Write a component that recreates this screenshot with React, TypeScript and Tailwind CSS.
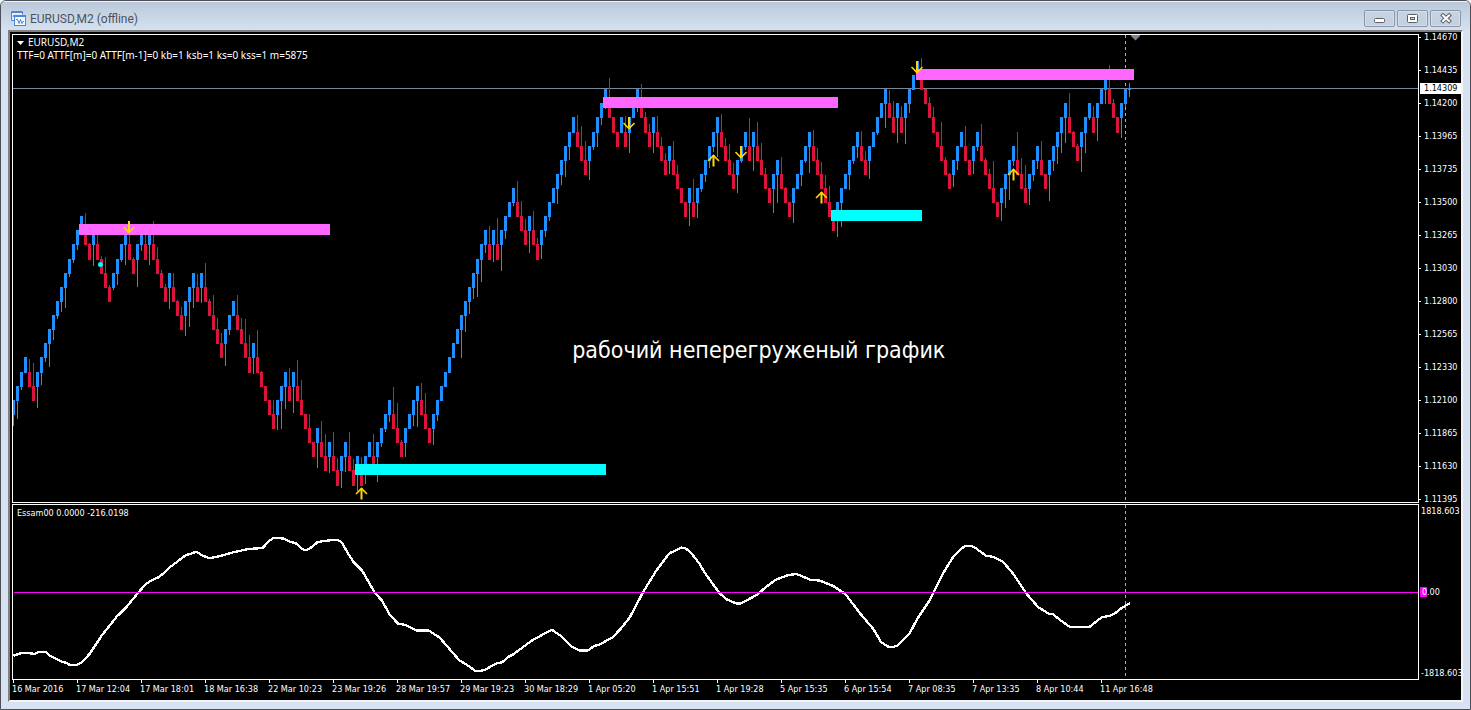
import React from "react";

const DATES = [
  "16 Mar 2016", "17 Mar 12:04", "17 Mar 18:01", "18 Mar 16:38", "22 Mar 10:23", "23 Mar 19:26",
  "28 Mar 19:57", "29 Mar 19:23", "30 Mar 18:29", "1 Apr 05:20", "1 Apr 15:51", "1 Apr 19:28",
  "5 Apr 15:35", "6 Apr 15:54", "7 Apr 08:35", "7 Apr 13:35", "8 Apr 10:44", "11 Apr 16:48",
];

const PRICES = [
  "1.14670", "1.14435", "1.14200", "1.13965", "1.13735", "1.13500", "1.13265", "1.13030",
  "1.12800", "1.12565", "1.12330", "1.12100", "1.11865", "1.11630", "1.11395",
];

// Chart y of every renko price level, highest first.
const LEVELS = [
  61, 75, 89, 103, 117, 132, 146, 160, 174, 188, 202, 216, 230, 244, 259, 273,
  287, 301, 315, 329, 343, 357, 372, 386, 400, 414, 428, 442, 456, 470, 485,
];
const FIRST_LEVEL = 24;

// Bricks in time order: direction, then the wick tip in thirds of a pixel below the leg's origin (0 = no wick).
const LEGS: { origin: number; bricks: string }[] = [
  {
    origin: 200,
    bricks:
      "U678 U657 U570 U0 D477 D489 U624 U555 U486 U501 U420 U357 U336 U324 U231 U189 U150 U0 D39 D129 U198 D90 D168 D171 D255 U270 U255 U186 U195 D70 D171 U261 U153 D100 U195 D63 D141 D210 D252 U327 D219 D300 D321 U408 U381 U324 D222 U309 D189 D297 D285 D354 D399 U498 U405 U0 D285 D354 D357 D405 U522 D390 D513 D0 D0 D600 U690 U687 U627 D504 U639 D480 D540 D0 D642 D0 U804 D663 D702 U819 D696 D774 U864 U816 D696 D777",
  },
  {
    origin: 340,
    bricks:
      "U453 D351 U432 U0 D282 U426 U321 U276 U246 D141 D189 D300 U351 U0 U258 U261 D129 D159 D0",
  },
  {
    origin: 170,
    bricks:
      "U825 U753 U0 U0 U0 U0 U0 U564 U486 U432 U387 U381 U336 U249 D168 U276 D144 U303 U207 U0 U108 D33 D93 D147 U249 D123 D204",
  },
  {
    origin: 70,
    bricks:
      "U567 U501 U453 U0 U402 U345 U321 U270 U0 D135 D168 D213 U330 U240 U231 U165 U117 D24 D0 D0 U0 D138 U249 U0 U126 D42 D126 D162 U249 D138 D201 D249 U312 D213 D285 D0 D0 U468 D327 U444 U366 U336 U294 U246 U261 D132 D204 D222 D279 U369 U279 U240 D144 U303 D156 D219 D294 D0 U429 U399 D261 D351 D0 U459 U0 U348 U279 U309 D180 D234 D276 D315 D348 D0",
  },
  {
    origin: 50,
    bricks:
      "U561 U531 U0 U420 U342 U324 D243 D303 U387 U0 U255 U0 U234 D120 D153 U279 D168 U282 U189 U0 U0 D24 D0 D141 D171 D0 D216 D321 D369 U411 U360 U0 D228 D0 U372 U303 D222 D324 D357 D333 D0 U513 U474 U450 U348 D246 D324 D345 U465 U393 U357 D273 D0 U453 U363 U342 U309 U279 D129 D243 D282 U366 U309 U210 D168 U273 U0 U162 D45 D147 D0 U264 U171",
  },
];

type Brick = { up: boolean; x: number; top: number; bottom: number; tip: number };

function buildBricks(): Brick[] {
  const out: Brick[] = [];
  let level = FIRST_LEVEL;
  for (const leg of LEGS) {
    for (const code of leg.bricks.split(" ")) {
      const up = code[0] === "U";
      if (out.length > 0) level += up ? -1 : 1;
      const offset = Number(code.slice(1));
      const top = LEVELS[level];
      const bottom = LEVELS[level + 1] + 1;
      const tip = offset === 0 ? (up ? bottom : top) : Math.round(leg.origin + offset / 3);
      out.push({ up, x: 12 + out.length * 4, top, bottom, tip });
    }
  }
  return out;
}

const BRICKS = buildBricks();

const ZONES = [
  { x: 79, y: 224, w: 251, color: "#ff66ff" },
  { x: 355, y: 464, w: 251, color: "#00ffff" },
  { x: 603, y: 97, w: 235, color: "#ff66ff" },
  { x: 831, y: 210, w: 91, color: "#00ffff" },
  { x: 916, y: 69, w: 218, color: "#ff66ff" },
];

const SELL_ARROWS = [[129, 221], [629, 117], [741, 146], [917, 61]];
const BUY_ARROWS = [[361, 487], [713, 154], [821, 191], [1013, 168]];

// Oscillator curve, three units to the pixel.
const CURVE =
  "40,497 62,490 80,488 103,492 115,486 137,486 150,497 185,515 198,518 208,524 232,524 247,516 270,490 305,437 350,380 378,353 412,311 438,282 455,271 475,262 493,248 512,230 558,195 572,192 588,185 605,195 628,205 660,198 700,187 745,177 788,174 808,152 822,143 852,146 870,155 890,161 908,178 918,181 930,175 952,157 970,153 1012,149 1026,158 1045,192 1062,218 1086,241 1125,309 1146,332 1168,372 1194,401 1216,405 1250,422 1285,421 1318,442 1345,473 1378,511 1400,524 1425,542 1440,543 " +
  "1455,539 1490,520 1506,517 1528,499 1540,493 1595,452 1655,419 1680,436 1715,470 1738,481 1765,481 1782,468 1798,464 1838,442 1865,413 1890,381 1930,305 1970,240 2008,190 2045,173 2055,174 2072,187 2100,223 2112,245 2158,309 2180,328 2208,340 2223,340 2270,315 2298,291 2328,269 2365,255 2390,252 2430,269 2460,272 2500,288 2536,312 2580,370 2620,417 2643,456 2662,469 2672,472 2690,468 2728,432 2752,386 2788,332 2835,240 2860,200 2880,180 " +
  "2895,168 2915,168 2925,173 2958,197 2980,201 3007,214 3035,245 3080,312 3115,352 3148,372 3160,373 3180,390 3210,411 3268,411 3305,382 3330,377 3345,370 3365,354 3390,339";

function PriceChart() {
  return (
    <svg
      className="absolute inset-0 h-full w-full"
      viewBox="13 35 1405 467"
      preserveAspectRatio="none"
      shapeRendering="crispEdges"
      role="img"
      aria-label="EURUSD renko chart"
    >
      <rect x="13" y="88" width="1405" height="1" fill="#778899" />
      <path d="M1125.5 35V502" stroke="#ffa500" strokeDasharray="3 3" />
      {BRICKS.map((b) => (
        <g key={b.x} fill={b.up ? "#1e90ff" : "#dc143c"}>
          <rect x={b.x} y={b.top} width="3" height={b.bottom - b.top} />
          <rect
            x={b.x + 1}
            y={Math.min(b.top, b.tip)}
            width="1"
            height={Math.max(b.bottom, b.tip) - Math.min(b.top, b.tip)}
          />
        </g>
      ))}
      <path d="M1129 83h1v5h1v2h-1v7h-1v-7h-1v-2h1z" fill="#1e90ff" />
      {ZONES.map((z) => (
        <rect key={z.x} x={z.x} y={z.y} width={z.w} height="11" fill={z.color} />
      ))}
      <g fill="none" stroke="#ffd700" shapeRendering="auto">
        {SELL_ARROWS.map(([x, y]) => (
          <g key={x} transform={`translate(${x} ${y})`}>
            <path d="M0 0V12" strokeWidth="2" />
            <path d="M-5.5 6L0 11.5L5.5 6" strokeWidth="1.6" />
          </g>
        ))}
        {BUY_ARROWS.map(([x, y]) => (
          <g key={x} transform={`translate(${x + 0.5} ${y})`}>
            <path d="M0 1V12.500" strokeWidth="2" />
            <path d="M-5.5 7L0 1.500L5.500 7" strokeWidth="1.6" />
          </g>
        ))}
      </g>
      <circle cx="100.5" cy="264.5" r="2.5" fill="#00ffff" shapeRendering="auto" />
      <path d="M1131 35h9v1l-4.500 4.500l-4.500-4.500z" fill="#778899" shapeRendering="auto" />
    </svg>
  );
}

function Oscillator() {
  return (
    <svg
      className="absolute inset-0 h-full w-full"
      viewBox="39 45 4215 522"
      preserveAspectRatio="none"
      shapeRendering="crispEdges"
      role="img"
      aria-label="Essam00 oscillator"
    >
      <path d="M3376.500 45V558" stroke="#ffa500" strokeWidth="3" strokeDasharray="9 9" />
      <polyline points={CURVE} fill="none" stroke="#ffffff" strokeWidth="7" strokeLinejoin="round" />
      <rect x="42" y="306" width="4212" height="3" fill="#ff00ff" />
    </svg>
  );
}

function WindowButton({ label, children }: { label: string; children: React.ReactNode }) {
  return (
    <button
      type="button"
      aria-label={label}
      className="flex h-[17px] w-[31px] items-center justify-center rounded-[2px] border border-[#8896a8] bg-linear-to-b from-[#c6d3e2] to-[#c3d0e0] shadow-[inset_0_0_0_1px_#d3dfec]"
    >
      <svg className="h-[11px] w-[14px]" viewBox="0 0 14 11">
        {children}
      </svg>
    </button>
  );
}

export default function App() {
  return (
    <div className="bg-[#f4f4f4]">
      <main className="flex h-screen min-h-[480px] flex-col overflow-hidden rounded-t-md border border-[#4c4f55] bg-[#d7e3f2] font-['DejaVu_Sans_Condensed','DejaVu_Sans',sans-serif]">
        <header className="flex h-[29px] shrink-0 items-start justify-between border-t border-[#eef4fa] bg-linear-to-b from-[#bac9d9] to-[#d5e1f0] pr-[9px] pl-[10px]">
          <div className="flex items-center gap-1 pt-[8px]">
            <svg className="size-[15px]" viewBox="0 0 15 15" fill="none" stroke="#4f86dc" aria-hidden="true">
              <path d="M3.500 9.500h-3v-9h11v3" fill="#e6effb" />
              <path d="M1 1.500h10" strokeWidth="1" />
              <path d="M2 6l1-2l1 1" />
              <rect x="3.500" y="4.500" width="11" height="10" fill="#f3f8ff" />
              <path d="M4 5.500h10" strokeWidth="1" />
              <path d="M5 8.500h1.500l1.500 4l1.500-4l1.500 4l1-2h1" />
            </svg>
            <h1 className="pt-px font-[Roboto,sans-serif] text-[12px] leading-4 text-[#4d535c]">EURUSD,M2 (offline)</h1>
          </div>
          <div className="flex gap-[2px] pt-[8px]">
            <WindowButton label="Minimize">
              <rect x="1.500" y="5.500" width="10" height="4" rx="1" fill="#ffffff" stroke="#5b6068" />
            </WindowButton>
            <WindowButton label="Restore">
              <rect x="1.500" y="1.500" width="10" height="8" rx="1" fill="#ffffff" stroke="#5b6068" />
              <rect x="4.500" y="4.500" width="4" height="2" fill="#c8d4e3" stroke="#5b6068" />
            </WindowButton>
            <WindowButton label="Close">
              <path d="M4 2.500L10 8M10 2.500L4 8" stroke="#5b6068" strokeWidth="4" strokeLinecap="square" />
              <path d="M4 2.500L10 8M10 2.500L4 8" stroke="#ffffff" strokeWidth="2" strokeLinecap="square" />
            </WindowButton>
          </div>
        </header>

        <div className="mr-[7px] mb-[7px] ml-[7px] flex min-h-0 flex-1 flex-col border-2 border-t-[#808080] border-r-[#f4f4f4] border-b-[#f4f4f4] border-l-[#808080] bg-black pt-[2px] pl-[2px] text-[9px] text-white">
          <section className="flex min-h-0 flex-1">
            <div className="relative min-w-0 flex-1 border border-white">
              <PriceChart />
              <div className="absolute top-[1px] left-[4px] font-['Noto_Sans',sans-serif] text-[10px] leading-[13px] whitespace-nowrap">
                <p className="flex items-center gap-[4px]">
                  <svg className="h-[4px] w-[7px]" viewBox="0 0 7 4" aria-hidden="true">
                    <path d="M0 0h7L3.500 4z" fill="#ffffff" />
                  </svg>
                  EURUSD,M2
                </p>
                <p>TTF=0 ATTF[m]=0 ATTF[m-1]=0 kb=1 ksb=1 ks=0 kss=1 m=5875</p>
              </div>
              <p className="absolute top-[65%] left-[39.8%] text-[23px] leading-[22px] whitespace-nowrap">
                рабочий неперегруженый график
              </p>
            </div>
            <div className="relative w-[42px] shrink-0">
              <ul className="flex h-full flex-col justify-between">
                {PRICES.map((p) => (
                  <li key={p} className="flex items-center gap-[3px] leading-[7px]">
                    <span className="h-px w-[2px] bg-white" />
                    {p}
                  </li>
                ))}
              </ul>
              <span className="absolute top-[49px] right-0 left-px bg-white pl-[4px] leading-[11px] text-black">
                1.14309
              </span>
            </div>
          </section>

          <section className="mt-px flex h-[176px] shrink-0">
            <div className="relative min-w-0 flex-1 border border-white">
              <Oscillator />
              <p className="absolute top-[2px] left-[4px] leading-[13px] whitespace-nowrap">Essam00 0.0000 -216.0198</p>
            </div>
            <div className="flex w-[42px] shrink-0 flex-col justify-between py-[2px] pl-[2px] leading-[10px] whitespace-nowrap">
              <span>1818.603</span>
              <span className="-ml-px flex">
                <span className="w-[7px] bg-[#ff00ff] pl-[2px]">0</span>.00
              </span>
              <span>-1818.603</span>
            </div>
          </section>

          <ol className="flex h-[20px] shrink-0 overflow-hidden">
            {DATES.map((d) => (
              <li
                key={d}
                className="w-16 shrink-0 pt-[3px] leading-[12px] whitespace-nowrap before:absolute before:-mt-[3px] before:ml-px before:h-[3px] before:w-px before:bg-white"
              >
                {d}
              </li>
            ))}
          </ol>
        </div>
      </main>
    </div>
  );
}
